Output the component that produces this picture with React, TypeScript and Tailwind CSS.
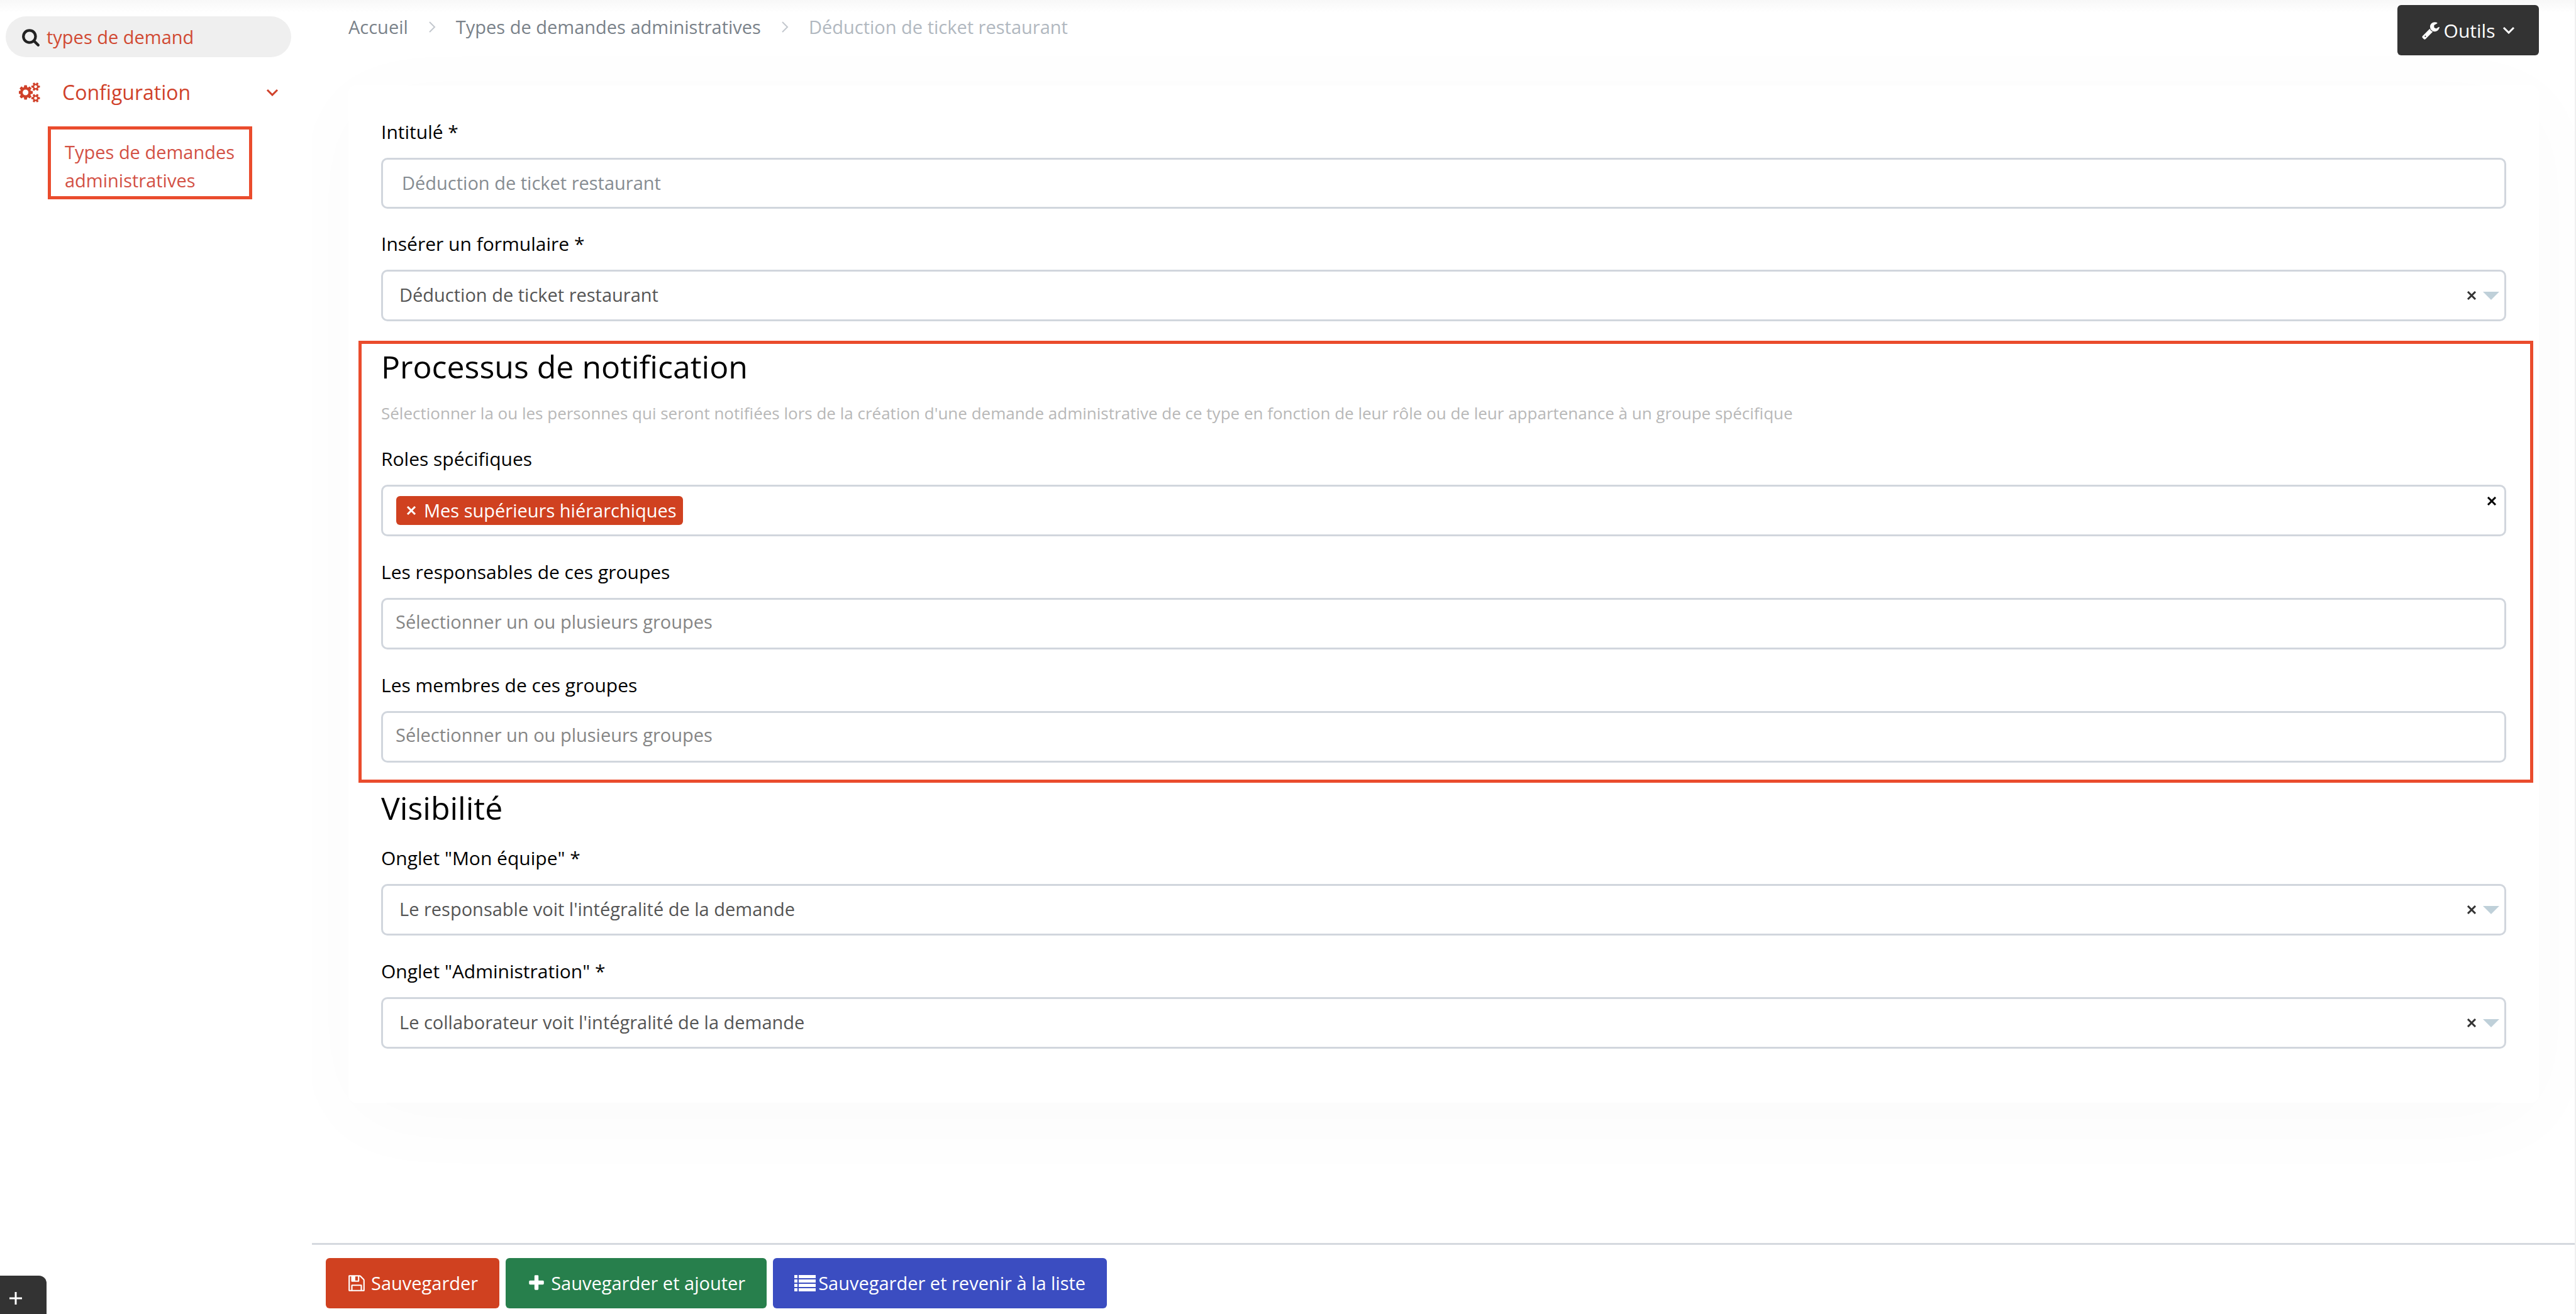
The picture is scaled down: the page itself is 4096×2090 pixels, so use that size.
import type { ReactNode } from "react";

type IconProps = { path: string; className?: string; viewBox?: string };

function Icon({ path, className, viewBox = "0 0 1792 1792" }: IconProps) {
  return (
    <svg viewBox={viewBox} className={className} fill="currentColor" aria-hidden="true">
      <path d={path} />
    </svg>
  );
}

const icons = {
  search:
    "M1216 832q0-185-131.5-316.5t-316.5-131.5-316.5 131.5-131.5 316.5 131.5 316.5 316.5 131.5 316.5-131.5 131.5-316.5zm512 832q0 52-38 90t-90 38q-54 0-90-38l-343-342q-179 124-399 124-143 0-273.5-55.5t-225-150-150-225-55.5-273.5 55.5-273.5 150-225 225-150 273.5-55.5 273.5 55.5 225 150 150 225 55.5 273.5q0 220-124 399l343 343q37 37 37 90z",
  cogs: "M832 896q0-106-75-181t-181-75-181 75-75 181 75 181 181 75 181-75 75-181zm768 512q0-52-38-90t-90-38-90 38-38 90q0 53 37.5 90.5t90.5 37.5 90.5-37.5 37.5-90.5zm0-1024q0-52-38-90t-90-38-90 38-38 90q0 53 37.5 90.5t90.5 37.5 90.5-37.5 37.5-90.5zm-384 421v185q0 10-7 19.5t-16 10.5l-155 24q-11 35-32 76 34 48 90 115 7 11 7 20 0 12-7 19-23 30-82.5 89.5t-78.5 59.5q-11 0-21-7l-115-90q-37 19-77 31-11 108-23 155-7 24-30 24h-186q-11 0-20-7.5t-10-17.5l-23-153q-34-10-75-31l-118 89q-7 7-20 7-11 0-21-8-144-133-144-160 0-9 7-19 10-14 41-53t47-61q-23-44-35-82l-152-24q-10-1-17-9.5t-7-19.5v-185q0-10 7-19.5t16-10.5l155-24q11-35 32-76-34-48-90-115-7-11-7-20 0-12 7-20 22-30 82-89t79-59q11 0 21 7l115 90q34-18 77-32 11-108 23-154 7-24 30-24h186q11 0 20 7.5t10 17.5l23 153q34 10 75 31l118-89q8-7 20-7 11 0 21 8 144 133 144 160 0 8-7 19-12 16-42 54t-45 60q23 48 34 82l152 23q10 2 17 10.5t7 19.5zm640 533v140q0 16-149 31-12 27-30 52 51 113 51 138 0 4-4 7-122 71-124 71-8 0-46-47t-52-68q-20 2-30 2t-30-2q-14 21-52 68t-46 47q-2 0-124-71-4-3-4-7 0-25 51-138-18-25-30-52-149-15-149-31v-140q0-16 149-31 13-29 30-52-51-113-51-138 0-4 4-7 4-2 35-20t59-34 30-16q8 0 46 46.5t52 67.5q20-2 30-2t30 2q51-71 92-112l6-2q4 0 124 70 4 3 4 7 0 25-51 138 17 23 30 52 149 15 149 31zm0-1024v140q0 16-149 31-12 27-30 52 51 113 51 138 0 4-4 7-122 71-124 71-8 0-46-47t-52-68q-20 2-30 2t-30-2q-14 21-52 68t-46 47q-2 0-124-71-4-3-4-7 0-25 51-138-18-25-30-52-149-15-149-31v-140q0-16 149-31 13-29 30-52-51-113-51-138 0-4 4-7 4-2 35-20t59-34 30-16q8 0 46 46.5t52 67.5q20-2 30-2t30 2q51-71 92-112l6-2q4 0 124 70 4 3 4 7 0 25-51 138 17 23 30 52 149 15 149 31z",
  wrench:
    "M448 1472q0-26-19-45t-45-19-45 19-19 45 19 45 45 19 45-19 19-45zm644-420l-682 682q-37 37-90 37-52 0-91-37l-106-108q-38-36-38-90 0-53 38-91l681-681q39 98 114.5 173.5t173.5 114.5zm634-435q0 39-23 106-47 134-164.5 217.5t-258.5 83.5q-185 0-316.5-131.5t-131.5-316.5 131.5-316.5 316.5-131.5q58 0 121.5 16.5t107.5 46.5q16 11 16 28t-16 28l-293 169v224l193 107q5-3 79-48.5t135.5-81 70.5-35.5q15 0 23.5 10t8.5 25z",
  save: "M512 1536h768v-384h-768v384zm896 0h128v-896q0-14-10-38.5t-20-34.5l-281-281q-10-10-34-20t-39-10v416q0 40-28 68t-68 28h-576q-40 0-68-28t-28-68v-416h-128v1280h128v-416q0-40 28-68t68-28h832q40 0 68 28t28 68v416zm-384-928v-320q0-13-9.5-22.5t-22.5-9.5h-192q-13 0-22.5 9.5t-9.5 22.5v320q0 13 9.5 22.5t22.5 9.5h192q13 0 22.5-9.5t9.5-22.5zm640 32v928q0 40-28 68t-68 28h-1344q-40 0-68-28t-28-68v-1344q0-40 28-68t68-28h928q40 0 88 20t76 48l280 280q28 28 48 76t20 88z",
  plus: "M1600 736v192q0 40-28 68t-68 28h-416v416q0 40-28 68t-68 28h-192q-40 0-68-28t-28-68v-416h-416q-40 0-68-28t-28-68v-192q0-40 28-68t68-28h416v-416q0-40 28-68t68-28h192q40 0 68 28t28 68v416h416q40 0 68 28t28 68z",
  list: "M0 0h5v5H0zM7 0h27v5H7zM0 7h5v5H0zM7 7h27v5H7zM0 14h5v5H0zM7 14h27v5H7zM0 21h5v5H0zM7 21h27v5H7z",
};

function Chevron({ className, width = 3 }: { className?: string; width?: number }) {
  return (
    <svg viewBox="0 0 20 12" className={className} fill="none" stroke="currentColor" strokeWidth={width} aria-hidden="true">
      <path d="M2 2l8 8 8-8" />
    </svg>
  );
}

function Cross({ className }: { className?: string }) {
  return (
    <svg viewBox="0 0 16 14" className={className} fill="none" stroke="currentColor" strokeWidth="3" aria-hidden="true">
      <path d="M2 1l12 12M14 1L2 13" />
    </svg>
  );
}

function Field({ id, label, children }: { id: string; label: string; children: ReactNode }) {
  return (
    <div>
      <label htmlFor={id} className="block h-[61px] text-[30px] leading-[40px] text-black">
        {label}
      </label>
      {children}
    </div>
  );
}

function SelectField({ id, label, value }: { id: string; label: string; value: string }) {
  return (
    <Field id={id} label={label}>
      <div className="flex h-[82px] items-center rounded-[10px] border-[3px] border-[#d1d6dd] bg-white pr-2">
        <select id={id} className="h-full flex-1 appearance-none bg-transparent pb-[2px] pl-[26px] text-[29px] text-[#555]">
          <option>{value}</option>
        </select>
        <button type="button" aria-label="Effacer" className="mr-[10px] text-[#333]">
          <Cross className="h-[14px] w-4" />
        </button>
        <svg viewBox="0 0 26 13" className="h-[13px] w-[26px] fill-[#bfd0d9]" aria-hidden="true">
          <path d="M0 0h26L13 13z" />
        </svg>
      </div>
    </Field>
  );
}

function GroupField({ id, label }: { id: string; label: string }) {
  return (
    <Field id={id} label={label}>
      <input
        id={id}
        type="text"
        placeholder="Sélectionner un ou plusieurs groupes"
        className="block h-[82px] w-full rounded-[10px] border-[3px] border-[#d1d6dd] bg-white px-5 pb-2 text-[29px] placeholder:text-[#858585]"
      />
    </Field>
  );
}

function Sidebar() {
  return (
    <aside className="w-[496px] shrink-0 pt-[26px]">
      <label className="ml-[9px] flex h-[65px] w-[454px] items-center rounded-full bg-[#efefef] pl-[25px]">
        <Icon path={icons.search} className="h-[30px] w-[30px] text-[#222]" />
        <input
          type="text"
          aria-label="Rechercher"
          defaultValue="types de demand"
          className="ml-[10px] w-[340px] bg-transparent text-[29px] text-[#d14a33]"
        />
      </label>
      <nav>
        <button type="button" className="mt-[33px] flex h-[46px] w-full items-center pr-[53px] pl-[30px] text-[#d0412a]">
          <Icon path={icons.cogs} viewBox="0 0 1920 1792" className="h-8 w-[35px]" />
          <span className="ml-[34px] text-[32px]">Configuration</span>
          <Chevron className="ml-auto h-3 w-5" />
        </button>
        <a
          href="#types"
          className="mt-[31px] ml-[76px] block h-[116px] w-[325px] border-[5px] border-[#ea4c2d] pt-[13px] pl-[22px] text-[29px] leading-[45px] text-[#d35145]"
        >
          Types de demandes
          <br />
          administratives
        </a>
      </nav>
      <button
        type="button"
        aria-label="Ajouter"
        className="fixed bottom-0 left-0 flex h-[61px] w-[74px] items-center rounded-tr-xl bg-[#333] pt-[11px] pl-[15px] text-white"
      >
        <svg viewBox="0 0 20 20" className="h-5 w-5" stroke="currentColor" strokeWidth="3" aria-hidden="true">
          <path d="M10 0v20M0 10h20" />
        </svg>
      </button>
    </aside>
  );
}

function Header() {
  return (
    <header className="flex h-32 items-start justify-between pt-2 pr-[57px] pl-[58px]">
      <nav aria-label="Fil d'Ariane" className="flex h-[70px] items-center text-[29px] text-[#7a828a]">
        <a href="#accueil">Accueil</a>
        <Chevron width={2} className="mx-7 h-3 w-5 -rotate-90 text-[#c3c8ce]" />
        <a href="#types">Types de demandes administratives</a>
        <Chevron width={2} className="mx-7 h-3 w-5 -rotate-90 text-[#c3c8ce]" />
        <span className="text-[#b1b8c0]">Déduction de ticket restaurant</span>
      </nav>
      <button
        type="button"
        className="flex h-20 w-[225px] items-center justify-center rounded-md bg-[#333] text-[30px] text-white"
      >
        <Icon path={icons.wrench} className="h-[30px] w-[30px]" />
        <span className="mr-3 ml-[6px]">Outils</span>
        <Chevron className="h-3 w-5" />
      </button>
    </header>
  );
}

function Footer() {
  return (
    <footer className="mt-auto flex h-[113px] gap-[10px] border-t-[3px] border-[#d5d9df] bg-white pt-[21px] pl-[22px] text-[29px] text-white">
      <button type="button" className="flex h-20 items-center rounded-md bg-[#d04120] px-[34px]">
        <Icon path={icons.save} className="mr-2 h-[30px] w-[30px]" />
        Sauvegarder
      </button>
      <button type="button" className="flex h-20 items-center rounded-md bg-[#277f4c] px-[34px]">
        <Icon path={icons.plus} className="mr-2 h-[30px] w-[30px]" />
        Sauvegarder et ajouter
      </button>
      <button type="button" className="flex h-20 items-center rounded-md bg-[#3b4dc1] px-[34px]">
        <Icon path={icons.list} viewBox="0 0 34 26" className="mr-1 h-[26px] w-[34px]" />
        Sauvegarder et revenir à la liste
      </button>
    </footer>
  );
}

export default function App() {
  return (
    <div className="flex min-h-screen border-r-2 border-[#f0f0f0] bg-[linear-gradient(#f8f8f8,#ffffff_20px)] font-['Open_Sans',sans-serif]">
      <Sidebar />
      <main className="flex min-w-0 flex-1 flex-col overflow-hidden">
        <Header />
        <form className="mt-2 mr-[57px] ml-[58px] h-[1618px] rounded-xl bg-white px-[52px] pt-[54px] shadow-[0_25px_150px_rgba(0,0,0,0.025)]">
          <Field id="title" label="Intitulé *">
            <input
              id="title"
              type="text"
              defaultValue="Déduction de ticket restaurant"
              className="block h-[81px] w-full rounded-[10px] border-[3px] border-[#d1d6dd] bg-white px-[30px] pb-[2px] text-[29px] text-[#868c92]"
            />
          </Field>
          <div className="mt-9">
            <SelectField id="form" label="Insérer un formulaire *" value="Déduction de ticket restaurant" />
          </div>

          <section className="mt-[31px] -mr-[43px] -ml-[36px] border-[5px] border-[#ea4c2d] pr-[38px] pb-[27px] pl-[31px]">
            <h2 className="pt-1 text-[50px] leading-[64px] text-black">Processus de notification</h2>
            <p className="mt-[22px] mb-[33px] text-[26px] leading-[40px] text-[#b8b8b8]">
              Sélectionner la ou les personnes qui seront notifiées lors de la création d'une demande administrative de ce
              type en fonction de leur rôle ou de leur appartenance à un groupe spécifique
            </p>
            <div className="space-y-[37px]">
              <Field id="roles" label="Roles spécifiques">
                <div className="flex h-[82px] items-center justify-between rounded-[10px] border-[3px] border-[#d1d6dd] bg-white pr-3 pl-[21px]">
                  <button
                    id="roles"
                    type="button"
                    className="flex h-[46px] items-center rounded-md bg-[#d04120] pr-[10px] pl-4 text-[29px] text-white"
                  >
                    <Cross className="mr-3 h-[14px] w-4" />
                    Mes supérieurs hiérarchiques
                  </button>
                  <button type="button" aria-label="Tout effacer" className="mt-4 self-start text-black">
                    <Cross className="h-[14px] w-4" />
                  </button>
                </div>
              </Field>
              <GroupField id="managers" label="Les responsables de ces groupes" />
              <GroupField id="members" label="Les membres de ces groupes" />
            </div>
          </section>

          <h2 className="mt-2 mb-7 text-[50px] leading-[64px] text-black">Visibilité</h2>
          <div className="space-y-[37px]">
            <SelectField
              id="team"
              label={'Onglet "Mon équipe" *'}
              value="Le responsable voit l'intégralité de la demande"
            />
            <SelectField
              id="admin"
              label={'Onglet "Administration" *'}
              value="Le collaborateur voit l'intégralité de la demande"
            />
          </div>
        </form>
        <Footer />
      </main>
    </div>
  );
}
